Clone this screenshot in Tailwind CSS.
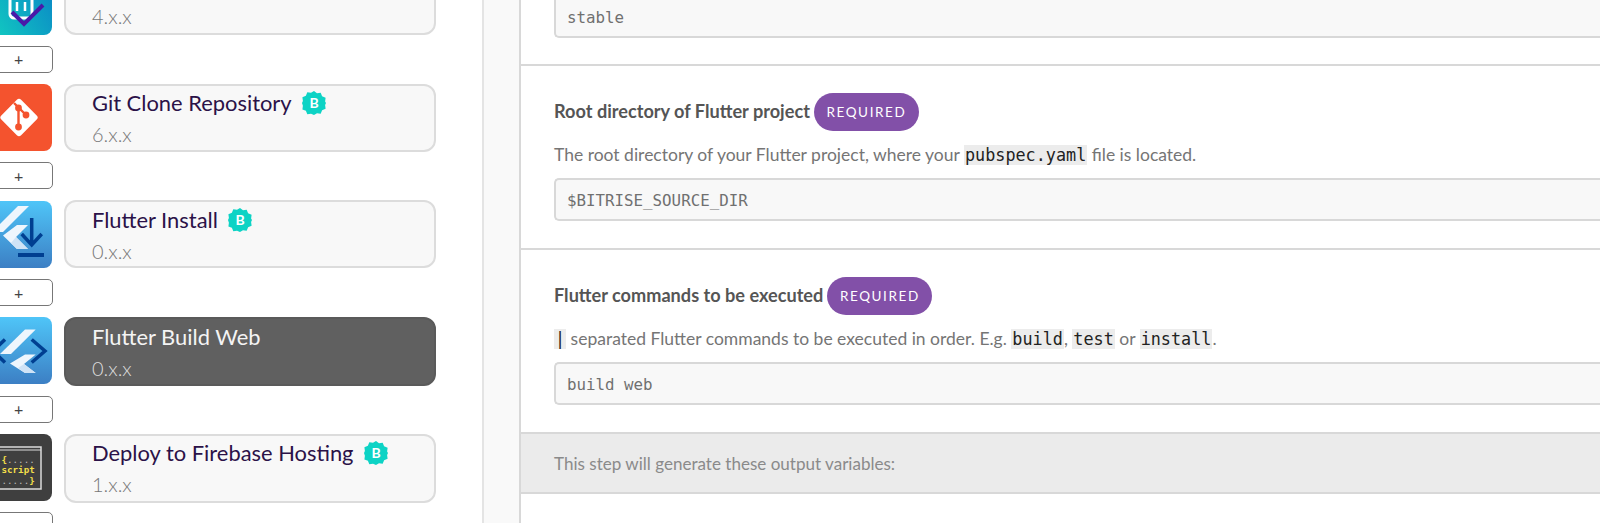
<!DOCTYPE html>
<html><head><meta charset="utf-8">
<script src="https://cdn.jsdelivr.net/npm/@tailwindcss/browser@4"></script>
</head>
<body class="bg-white">
<div class="flex h-[523px] w-[1600px] overflow-hidden font-['Lato',sans-serif]">
  <!-- Left: workflow steps -->
  <div class="w-[484px] shrink-0 border-r-2 border-[#e4e4e4]">
    <div class="-mt-[33px] -ml-[15px] flex flex-col">
      <!-- step 1 -->
      <div class="flex h-[68px] gap-[12px]">
        <svg width="67" height="67" viewBox="0 0 67 67" class="shrink-0 mt-[0.5px]">
          <defs><linearGradient id="a" x1="0" y1="1" x2="1" y2="0.4"><stop offset="0" stop-color="#12d0c0"/><stop offset="1" stop-color="#0b8cc6"/></linearGradient></defs>
          <rect width="67" height="67" rx="8" fill="url(#a)"/>
          <path d="M25 30v16a4 4 0 0 0 4 4h14a4 4 0 0 0 4-4V30" fill="none" stroke="#fff" stroke-width="3"/>
          <path d="M32 34v9M40 34v9" stroke="#fff" stroke-width="2.5"/>
          <path d="M27 44l12 12 19-19" fill="none" stroke="#4a19a8" stroke-width="4"/>
        </svg>
        <div class="h-[68px] w-[372px] rounded-[12px] border-2 border-[#dcdcdc] bg-[#f8f8f8] pl-[26px]">
          <div class="h-[32px]"></div>
          <div class="text-[20px] leading-[30px] font-light text-[#777]">4.x.x</div>
        </div>
      </div>
      <div class="flex h-[48.67px] items-center"><div class="flex h-[27px] w-[67.5px] items-center justify-center rounded-[5px] border-[1.5px] border-[#777] text-[16px] text-[#444]">+</div></div>
      <!-- Git -->
      <div class="flex h-[68px] gap-[12px]">
        <svg width="67" height="67" viewBox="0 0 67 67" class="shrink-0 mt-[0.5px]">
          <rect width="67" height="67" rx="8" fill="#f4532e"/>
          <rect x="20" y="19.5" width="28" height="28" rx="3" transform="rotate(45 34 33.5)" fill="#fff"/>
          <path d="M29 19l12 12M33.5 23.500v19" stroke="#f4532e" stroke-width="2.4" fill="none"/>
          <circle cx="33.500" cy="43" r="3.400" fill="#f4532e"/><circle cx="41" cy="31" r="3.400" fill="#f4532e"/><circle cx="33.500" cy="24" r="3.400" fill="#f4532e"/>
        </svg>
        <div class="h-[68px] w-[372px] rounded-[12px] border-2 border-[#dcdcdc] bg-[#f8f8f8] pl-[26px]">
          <div class="flex h-[34px] items-center pt-[2px] text-[21.900px] text-[#2b1248]">Git Clone Repository
            <svg width="24" height="24" viewBox="0 0 24 24" class="ml-[10px] -mt-[1px]"><path fill="#0dd3c5" d="M12 0l3 2.300 3.700-.5 1.400 3.500 3.500 1.400-.5 3.700L24 12l-.9 2.100.5 3.700-3.500 1.400-1.400 3.500-3.700-.5L12 24l-3-1.200-3.700.5-1.400-3.500-3.500-1.400.5-3.700L0 12l.9-2.100-.5-3.700 3.500-1.400 1.400-3.500 3.700.5z"/><text x="12" y="17" text-anchor="middle" font-size="14" font-weight="700" fill="#fff" font-family="Lato">B</text></svg>
          </div>
          <div class="-mt-[1px] text-[20px] leading-[30px] font-light text-[#777]">6.x.x</div>
        </div>
      </div>
      <div class="flex h-[48.67px] items-center"><div class="flex h-[27px] w-[67.5px] items-center justify-center rounded-[5px] border-[1.5px] border-[#777] text-[16px] text-[#444]">+</div></div>
      <!-- Flutter Install -->
      <div class="flex h-[68px] gap-[12px]">
        <svg width="67" height="67" viewBox="0 0 67 67" class="shrink-0 mt-[0.5px]">
          <defs><linearGradient id="f" x1="0" y1="0" x2="0" y2="1"><stop offset="0" stop-color="#4fc5f8"/><stop offset="1" stop-color="#3c7fc4"/></linearGradient></defs>
          <rect width="67" height="67" rx="8" fill="url(#f)"/>
          <path d="M33 5h11L18 31H7z" fill="#eef6fd"/>
          <path d="M32 24h11L31 36l12 12H32L18 34.500z" fill="#eef6fd"/>
          <path d="M31 36l12 12H32l-6-6z" fill="#cfe3f6"/>
          <path d="M46.700 17v27M36.700 33l10 11 10-11" fill="none" stroke="#003f91" stroke-width="3.500"/>
          <rect x="33" y="52" width="26" height="4" fill="#003f91"/>
        </svg>
        <div class="h-[68px] w-[372px] rounded-[12px] border-2 border-[#dcdcdc] bg-[#f8f8f8] pl-[26px]">
          <div class="flex h-[34px] items-center pt-[2px] text-[21.900px] text-[#2b1248]">Flutter Install
            <svg width="24" height="24" viewBox="0 0 24 24" class="ml-[10px] -mt-[1px]"><path fill="#0dd3c5" d="M12 0l3 2.300 3.700-.5 1.400 3.500 3.500 1.400-.5 3.700L24 12l-.9 2.100.5 3.700-3.500 1.400-1.400 3.500-3.700-.5L12 24l-3-1.200-3.700.5-1.400-3.500-3.500-1.400.5-3.700L0 12l.9-2.100-.5-3.700 3.500-1.400 1.400-3.500 3.700.5z"/><text x="12" y="17" text-anchor="middle" font-size="14" font-weight="700" fill="#fff" font-family="Lato">B</text></svg>
          </div>
          <div class="text-[20px] leading-[30px] font-light text-[#777]">0.x.x</div>
        </div>
      </div>
      <div class="flex h-[48.67px] items-center"><div class="flex h-[27px] w-[67.5px] items-center justify-center rounded-[5px] border-[1.5px] border-[#777] text-[16px] text-[#444]">+</div></div>
      <!-- Flutter Build Web -->
      <div class="flex h-[68px] gap-[12px]">
        <svg width="67" height="67" viewBox="0 0 67 67" class="shrink-0 mt-[0.5px]">
          <rect width="67" height="67" rx="8" fill="url(#f)"/>
          <path d="M20 22.500L8 34l12 11.500M46.700 22.500L60 34 46.700 45.500" fill="none" stroke="#003f91" stroke-width="3.500"/>
          <path d="M40 12.500h10.700L26 37H15z" fill="#eef6fd"/>
          <path d="M40 37.500h10.700L39 47l11.700 9H40L25 46.500z" fill="#eef6fd"/>
          <path d="M39 47l11.700 9H40l-7-5z" fill="#cfe3f6"/>
        </svg>
        <div class="h-[69px] w-[372px] rounded-[12px] border-2 border-[#5a5a5a] bg-[#606060] pl-[26px]">
          <div class="flex h-[34px] items-center pt-[2px] text-[21.900px] text-[#f4f4f4]">Flutter Build Web</div>
          <div class="text-[20px] leading-[30px] font-light text-[#dcdcdc]">0.x.x</div>
        </div>
      </div>
      <div class="flex h-[48.67px] items-center"><div class="flex h-[27px] w-[67.5px] items-center justify-center rounded-[5px] border-[1.5px] border-[#777] text-[16px] text-[#444]">+</div></div>
      <!-- Deploy -->
      <div class="flex h-[68px] gap-[12px]">
        <svg width="67" height="67" viewBox="0 0 67 67" class="shrink-0 mt-[0.5px]">
          <rect width="67" height="67" rx="8" fill="#3f3f3f"/>
          <rect x="-4" y="13" width="60" height="42" fill="none" stroke="#dcdcdc" stroke-width="1.500"/>
          <path d="M-4 16h60" stroke="#dcdcdc" stroke-width="1"/>
          <g font-family="DejaVu Sans Mono" font-size="9.200" font-weight="700" fill="#f2df4a">
            <text x="16.500" y="29">{<tspan fill="#bbb" font-weight="400">.....</tspan></text>
            <text x="16.500" y="39">script</text>
            <text x="16.500" y="49.500"><tspan fill="#bbb" font-weight="400">.....</tspan>}</text>
          </g>
        </svg>
        <div class="h-[69px] w-[372px] rounded-[12px] border-2 border-[#dcdcdc] bg-[#f8f8f8] pl-[26px]">
          <div class="flex h-[34px] items-center pt-[2px] text-[21.900px] text-[#2b1248]">Deploy to Firebase Hosting
            <svg width="24" height="24" viewBox="0 0 24 24" class="ml-[10px] -mt-[1px]"><path fill="#0dd3c5" d="M12 0l3 2.300 3.700-.5 1.400 3.500 3.500 1.400-.5 3.700L24 12l-.9 2.100.5 3.700-3.500 1.400-1.400 3.500-3.700-.5L12 24l-3-1.200-3.700.5-1.400-3.500-3.500-1.400.5-3.700L0 12l.9-2.100-.5-3.700 3.500-1.400 1.400-3.500 3.700.5z"/><text x="12" y="17" text-anchor="middle" font-size="14" font-weight="700" fill="#fff" font-family="Lato">B</text></svg>
          </div>
          <div class="-mt-[1px] text-[20px] leading-[30px] font-light text-[#777]">1.x.x</div>
        </div>
      </div>
      <div class="flex h-[48.67px] items-center"><div class="h-[27px] w-[67.5px] rounded-[5px] border-[1.5px] border-[#777]"></div></div>
    </div>
  </div>
  <!-- Gutter -->
  <div class="w-[37px] shrink-0 border-r-2 border-[#d8d8d8] bg-[#f9f9f9]"></div>
  <!-- Content -->
  <div class="min-w-0 flex-1 -mt-[118px] flex flex-col">
    <section class="flex h-[184px] shrink-0 flex-col justify-end border-b-2 border-[#d8d8d8] pb-[26.500px] pl-[33px]">
      <div class="flex h-[43px] items-center rounded-l-[5px] border-2 border-r-0 border-[#d8d8d8] bg-[#f8f8f8] pt-[3px] pl-[11px] font-['DejaVu_Sans_Mono',monospace] text-[15.800px] text-[#707070]">stable</div>
    </section>
    <section class="h-[184px] shrink-0 border-b-2 border-[#d8d8d8] pt-[27px] pl-[33px]">
      <div class="flex h-[38px] items-center gap-[4px]">
        <span class="-mt-[1px] text-[18.150px] font-bold text-[#555]">Root directory of Flutter project</span>
        <span class="flex h-[38px] w-[105px] items-center justify-center rounded-full bg-[#8250a8] text-[13.500px] tracking-[1.600px] text-white">REQUIRED</span>
      </div>
      <p class="mt-[12px] text-[17.500px] leading-[24px] text-[#757575]">The root directory of your Flutter project, where your <code class="bg-[#ececec] px-[1px] font-['DejaVu_Sans_Mono',monospace] text-[16.800px] text-[#222]">pubspec.yaml</code> file is located.</p>
      <div class="mt-[11px] flex h-[43px] items-center rounded-l-[5px] border-2 border-r-0 border-[#d8d8d8] bg-[#f8f8f8] pt-[3px] pl-[11px] font-['DejaVu_Sans_Mono',monospace] text-[15.800px] text-[#707070]">$BITRISE_SOURCE_DIR</div>
    </section>
    <section class="h-[184px] shrink-0 border-b-2 border-[#d8d8d8] pt-[27px] pl-[33px]">
      <div class="flex h-[38px] items-center gap-[4px]">
        <span class="-mt-[1px] text-[18.150px] font-bold text-[#555]">Flutter commands to be executed</span>
        <span class="flex h-[38px] w-[105px] items-center justify-center rounded-full bg-[#8250a8] text-[13.500px] tracking-[1.600px] text-white">REQUIRED</span>
      </div>
      <p class="mt-[12px] text-[17.500px] leading-[24px] text-[#757575]"><code class="bg-[#ececec] px-[1px] font-['DejaVu_Sans_Mono',monospace] text-[16.800px] text-[#222]">|</code> separated Flutter commands to be executed in order. E.g. <code class="bg-[#ececec] px-[1px] font-['DejaVu_Sans_Mono',monospace] text-[16.800px] text-[#222]">build</code>, <code class="bg-[#ececec] px-[1px] font-['DejaVu_Sans_Mono',monospace] text-[16.800px] text-[#222]">test</code> or <code class="bg-[#ececec] px-[1px] font-['DejaVu_Sans_Mono',monospace] text-[16.800px] text-[#222]">install</code>.</p>
      <div class="mt-[11px] flex h-[43px] items-center rounded-l-[5px] border-2 border-r-0 border-[#d8d8d8] bg-[#f8f8f8] pt-[3px] pl-[11px] font-['DejaVu_Sans_Mono',monospace] text-[15.800px] text-[#707070]">build web</div>
    </section>
    <div class="flex h-[60px] shrink-0 items-center border-b-2 border-[#d8d8d8] bg-[#ebebeb] pt-[1px] pl-[33px] text-[17.060px] text-[#8a8a8a]">This step will generate these output variables:</div>
  </div>
</div>
</body></html>
